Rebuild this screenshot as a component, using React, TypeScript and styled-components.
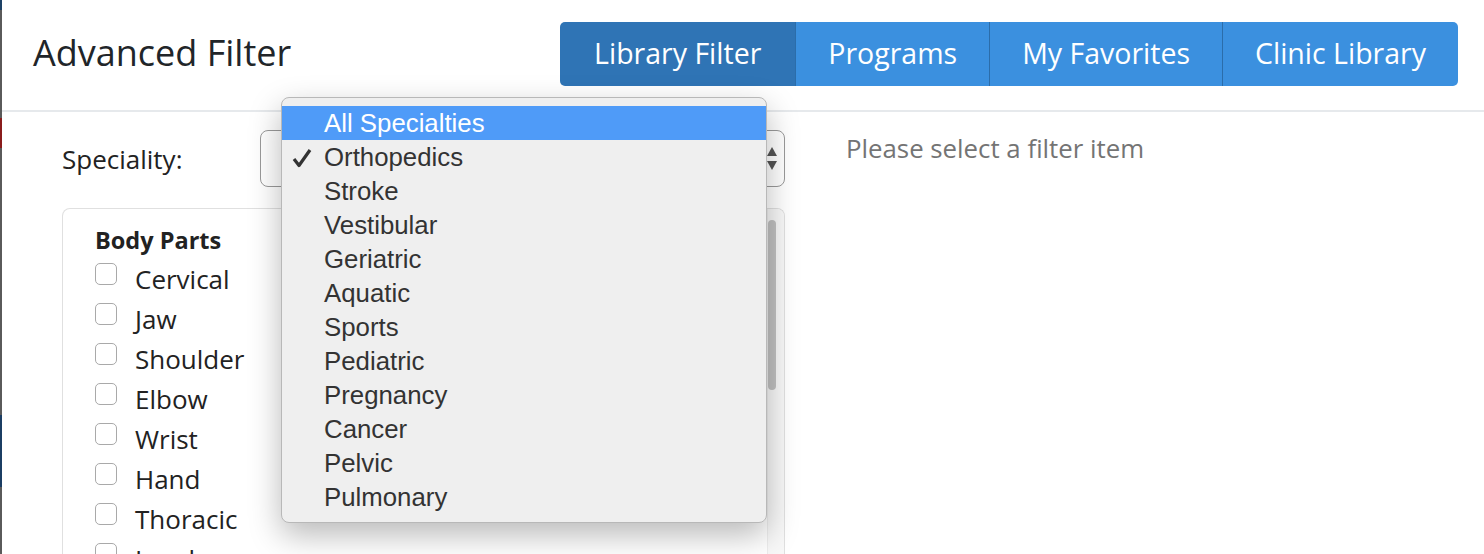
import React from 'react';
import styled, { createGlobalStyle } from 'styled-components';

const GlobalStyle = createGlobalStyle`
  html, body {
    margin: 0;
    padding: 0;
    background: #ffffff;
    overflow: hidden;
  }
  body {
    font-family: "Open Sans", "Liberation Sans", sans-serif;
    color: #222;
  }
`;

const Page = styled.div`
  display: flex;
  width: 1484px;
  height: 554px;
  overflow: hidden;
`;

// the dark page behind the modal peeks out on the left edge
const Backdrop = styled.div`
  width: 2px;
  flex-shrink: 0;
  background: linear-gradient(
    to bottom,
    #1d4166 0px, #1d4166 10px,
    #5a5a5a 10px, #5a5a5a 118px,
    #8a1c1c 118px, #8a1c1c 148px,
    #5a5a5a 148px, #5a5a5a 415px,
    #1b3d63 415px, #1b3d63 487px,
    #5a5a5a 487px
  );
`;

const Modal = styled.div`
  flex: 1;
  background: #fff;
  display: flex;
  flex-direction: column;
  min-height: 0;
`;

const Header = styled.div`
  flex-shrink: 0;
  height: 110px;
  display: flex;
  align-items: center;
  justify-content: space-between;
  padding: 0 26px 0 31px;
  border-bottom: 2px solid #e6e9ec;
  box-sizing: content-box;
`;

const Title = styled.h4`
  margin: 0 0 6px 0;
  font-size: 36px;
  font-weight: 400;
  color: #212529;
`;

const TabGroup = styled.div`
  display: flex;
  height: 64px;
  margin-top: -2px;
  border-radius: 5px;
  overflow: hidden;
`;

const Tab = styled.div<{ active?: boolean }>`
  display: flex;
  align-items: center;
  padding: 0 ${({ active }) => (active ? '34px' : '32px')} 2px;
  font-size: 28.5px;
  color: #fff;
  background: ${({ active }) => (active ? '#2f74b5' : '#3b90df')};
  & + & {
    border-left: ${({ active }) => (active ? 'none' : '1px solid #2b6daa')};
  }
`;

const Body = styled.div`
  flex: 1;
  min-height: 0;
  display: flex;
  padding: 18px 0 0 60px;
`;

const LeftCol = styled.div`
  width: 723px;
  display: flex;
  flex-direction: column;
  gap: 21px;
`;

const RightCol = styled.div`
  padding: 0 0 0 61px;
  font-size: 25.8px;
  color: #747474;
`;

const FieldRow = styled.div`
  display: flex;
  align-items: center;
  flex-shrink: 0;
  height: 57px;
`;

const FieldLabel = styled.label`
  width: 198px;
  font-size: 26px;
  color: #222;
`;

const SelectBox = styled.div`
  position: relative;
  flex: 1;
  height: 57px;
  box-sizing: border-box;
  border: 1.5px solid #9a9a9a;
  border-radius: 8px;
  background: #fff;
  display: flex;
  align-items: center;
  justify-content: flex-end;
  padding-right: 6px;
`;

const Dropdown = styled.div`
  position: absolute;
  left: 20px;
  top: -34px;
  width: 484px;
  padding: 8px 0;
  background: #efefef;
  border: 1px solid #b8b8b8;
  border-radius: 8px;
  box-shadow: 0 12px 32px rgba(0, 0, 0, 0.28);
  z-index: 10;
  font-family: "Liberation Sans", Arial, sans-serif;
`;

const Option = styled.div<{ highlighted?: boolean }>`
  position: relative;
  height: 34px;
  line-height: 34px;
  padding-left: 42px;
  font-size: 25.8px;
  color: ${({ highlighted }) => (highlighted ? '#fff' : '#333')};
  background: ${({ highlighted }) => (highlighted ? '#4f9bf8' : 'transparent')};
`;

const Check = styled.svg`
  position: absolute;
  left: 10px;
  top: 8px;
`;

const FilterBox = styled.div`
  flex: 1;
  min-height: 0;
  display: flex;
  border: 1.5px solid #e0e0e0;
  border-bottom: none;
  border-radius: 8px 8px 0 0;
  overflow: hidden;
`;

const FilterList = styled.div`
  flex: 1;
  padding: 13px 0 0 32px;
`;

const GroupTitle = styled.div`
  font-size: 23.5px;
  font-weight: 700;
  line-height: 37px;
  color: #222;
`;

const CheckRow = styled.label`
  display: flex;
  align-items: center;
  height: 40px;
  font-size: 26px;
  color: #222;
`;

const CheckBox = styled.span`
  width: 22px;
  height: 22px;
  box-sizing: border-box;
  border: 1.5px solid #a9a9a9;
  border-radius: 5px;
  background: #fff;
  margin: -10px 18px 0 0;
`;

const ScrollTrack = styled.div`
  width: 16px;
  background: #f8f8f8;
  border-left: 1px solid #ededed;
  padding-top: 11px;
`;

const ScrollThumb = styled.div`
  width: 8px;
  height: 170px;
  border-radius: 4px;
  background: #c1c1c1;
`;

const specialties = [
  'All Specialties',
  'Orthopedics',
  'Stroke',
  'Vestibular',
  'Geriatric',
  'Aquatic',
  'Sports',
  'Pediatric',
  'Pregnancy',
  'Cancer',
  'Pelvic',
  'Pulmonary',
];

const bodyParts = ['Cervical', 'Jaw', 'Shoulder', 'Elbow', 'Wrist', 'Hand', 'Thoracic', 'Lumbar'];

const App: React.FC = () => {
  return (
    <>
      <GlobalStyle />
      <Page>
        <Backdrop />
        <Modal>
          <Header>
            <Title>Advanced Filter</Title>
            <TabGroup>
              <Tab active>Library Filter</Tab>
              <Tab>Programs</Tab>
              <Tab>My Favorites</Tab>
              <Tab>Clinic Library</Tab>
            </TabGroup>
          </Header>
          <Body>
            <LeftCol>
              <FieldRow>
                <FieldLabel>Speciality:</FieldLabel>
                <SelectBox>
                  <svg width="12" height="26" viewBox="0 0 12 26">
                    <path d="M6 1 L11 10 L1 10 Z" fill="#555" />
                    <path d="M1 15 L11 15 L6 24 Z" fill="#555" />
                  </svg>
                  <Dropdown>
                    {specialties.map((s, i) => (
                      <Option key={s} highlighted={i === 0}>
                        {i === 1 && (
                          <Check width="20" height="20" viewBox="0 0 20 20">
                            <path d="M2 11 L7 17.5 L18 2" fill="none" stroke="#333" strokeWidth="3.2" strokeLinejoin="round" />
                          </Check>
                        )}
                        {s}
                      </Option>
                    ))}
                  </Dropdown>
                </SelectBox>
              </FieldRow>
              <FilterBox>
                <FilterList>
                  <GroupTitle>Body Parts</GroupTitle>
                  {bodyParts.map((p) => (
                    <CheckRow key={p}>
                      <CheckBox />
                      {p}
                    </CheckRow>
                  ))}
                </FilterList>
                <ScrollTrack>
                  <ScrollThumb />
                </ScrollTrack>
              </FilterBox>
            </LeftCol>
            <RightCol>Please select a filter item</RightCol>
          </Body>
        </Modal>
      </Page>
    </>
  );
};

export default App;
